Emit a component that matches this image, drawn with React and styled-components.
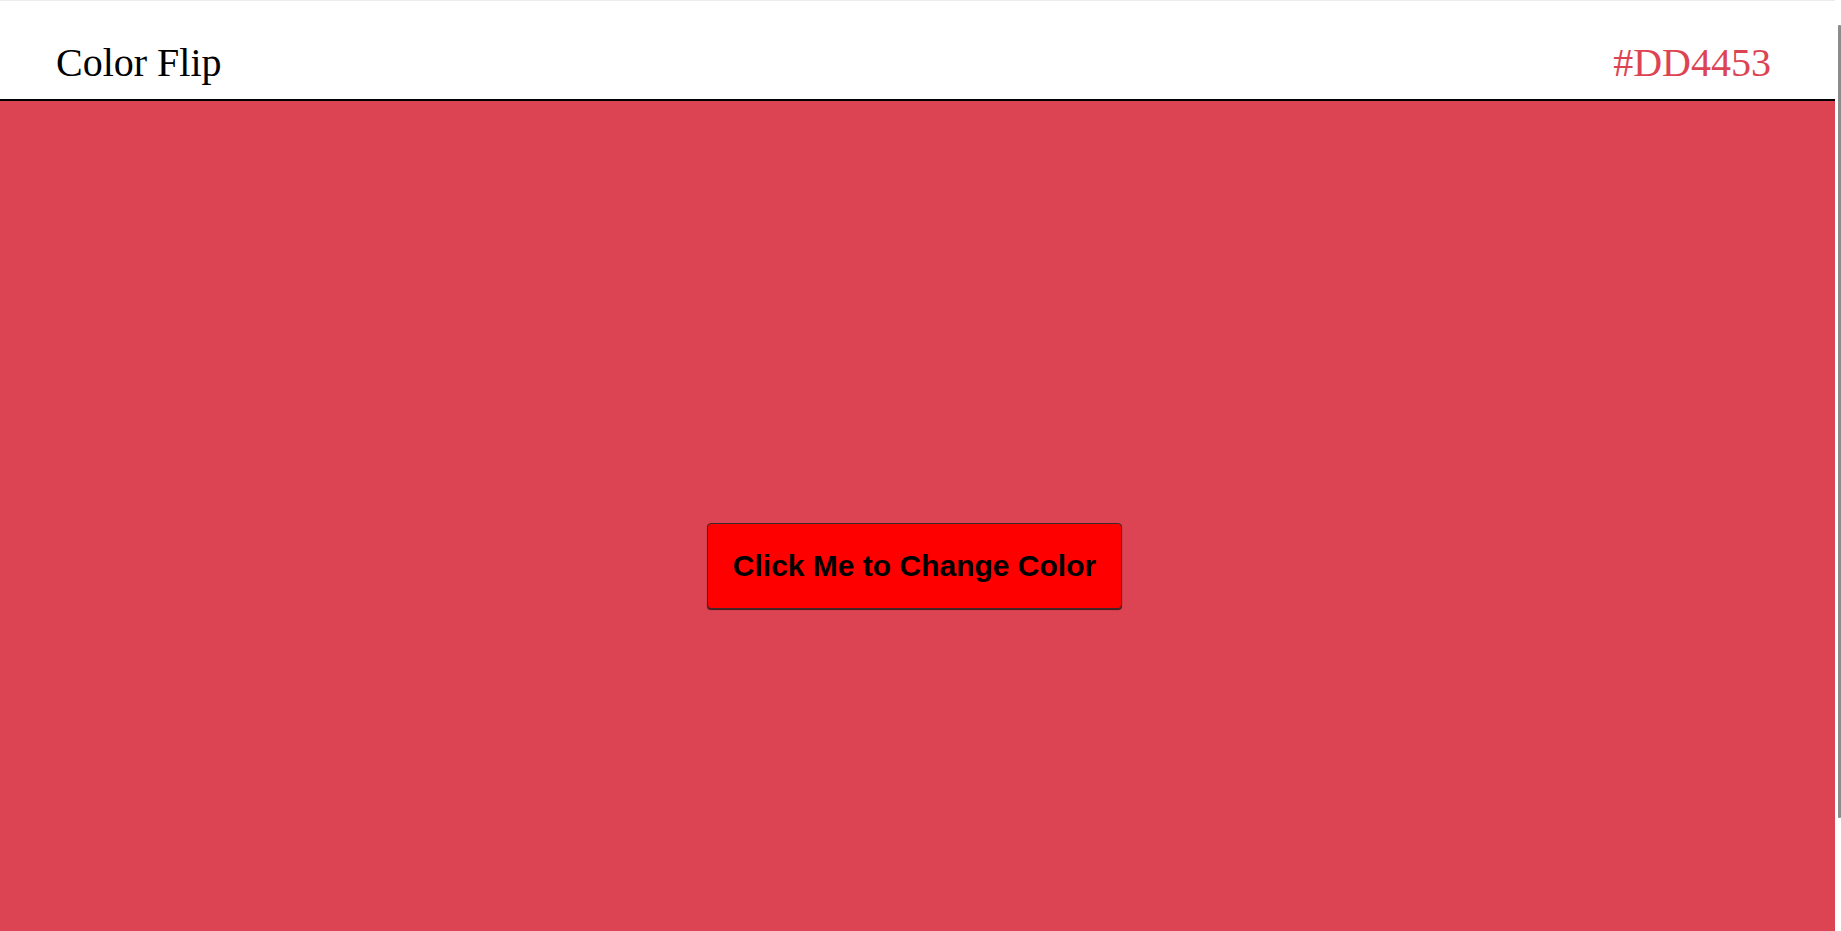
import React, { useState } from "react";
import styled, { createGlobalStyle } from "styled-components";

const GlobalStyle = createGlobalStyle`
  html, body {
    margin: 0;
    padding: 0;
    background: #ffffff;
  }
  body {
    font-family: "Liberation Serif", "Times New Roman", serif;
  }
`;

const Page = styled.div`
  display: flex;
  flex-direction: column;
  margin-right: 6px;
`;

const Header = styled.header`
  display: flex;
  justify-content: space-between;
  align-items: flex-end;
  padding: 38px 64px 13px 56px;
  border-top: 1px solid #ececec;
  border-bottom: 2px solid #000000;
  background: #ffffff;
`;

const Title = styled.span`
  font-family: "Liberation Serif", "Times New Roman", serif;
  font-size: 40px;
  color: ${(p) => p.$color || "#000000"};
`;

const Stage = styled.main`
  height: 100vh;
  display: flex;
  align-items: center;
  justify-content: center;
  padding-right: 6px;
  padding-bottom: 2px;
  box-sizing: border-box;
  background: ${(p) => p.$bg};
`;

const FlipButton = styled.button`
  font-family: "Liberation Sans", Arial, sans-serif;
  font-weight: 700;
  font-size: 30px;
  color: #000000;
  background: #ff0000;
  border: 1px solid #3a2a2a;
  border-radius: 4px;
  box-shadow: 0 1px 1px rgba(0, 0, 0, 0.7);
  padding: 25px 25px;
  cursor: pointer;
`;

const ScrollThumb = styled.div`
  position: fixed;
  top: 25px;
  right: 0;
  width: 3px;
  height: 793px;
  background: #8c8c8c;
  border-radius: 1px;
`;

const palette = ["#DD4453", "#4453DD", "#44DD53", "#DDAA44", "#8844DD"];

export default function App() {
  const [idx, setIdx] = useState(0);
  const color = palette[idx];
  return (
    <Page>
      <GlobalStyle />
      <Header>
        <Title>Color Flip</Title>
        <Title $color={color}>{color}</Title>
      </Header>
      <Stage $bg={color}>
        <FlipButton onClick={() => setIdx((i) => (i + 1) % palette.length)}>
          Click Me to Change Color
        </FlipButton>
      </Stage>
      <ScrollThumb />
    </Page>
  );
}
